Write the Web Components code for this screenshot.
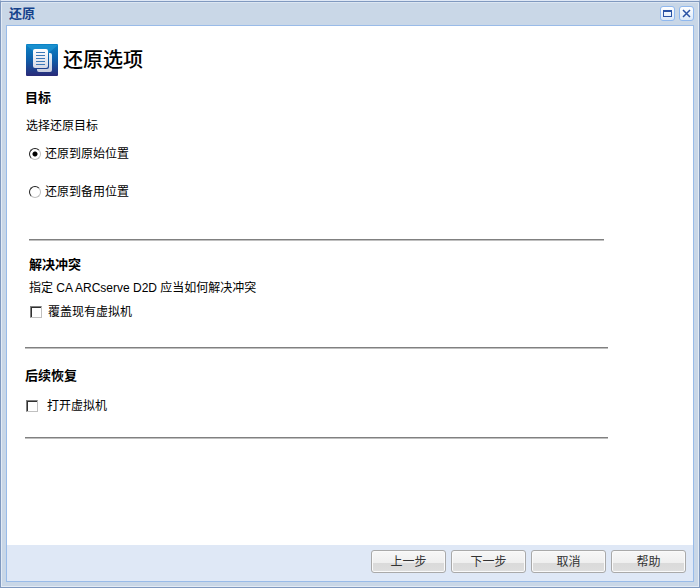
<!DOCTYPE html>
<html lang="zh-CN">
<head>
<meta charset="utf-8">
<title>还原</title>
<style>
  html, body {
    height: 100%;
    margin: 0;
  }
  body {
    font: 12px/16px "Liberation Sans", "Noto Sans CJK SC", sans-serif;
    color: #000;
    background: #dfe8f6;
  }
</style>
</head>
<body>
<restore-window heading="还原">
  <page-heading>还原选项</page-heading>

  <option-section class="target" heading="目标">
    <p slot="hint">选择还原目标</p>
    <choice-group>
      <choice-item type="radio" name="target" value="original" checked>还原到原始位置</choice-item>
      <choice-item type="radio" name="target" value="alternate">还原到备用位置</choice-item>
    </choice-group>
  </option-section>

  <option-section class="conflict" heading="解决冲突">
    <p slot="hint">指定 CA ARCserve D2D 应当如何解决冲突</p>
    <choice-item type="checkbox" name="overwrite">覆盖现有虚拟机</choice-item>
  </option-section>

  <option-section class="recovery" heading="后续恢复">
    <choice-item type="checkbox" name="poweron">打开虚拟机</choice-item>
  </option-section>

  <push-button slot="actions">上一步</push-button>
  <push-button slot="actions">下一步</push-button>
  <push-button slot="actions">取消</push-button>
  <push-button slot="actions">帮助</push-button>
</restore-window>

<script>
class RestoreWindow extends HTMLElement {
  connectedCallback() {
    this.attachShadow({ mode: 'open' });
    this.shadowRoot.innerHTML = `
      <style>
        :host {
          display: flex;
          flex-direction: column;
          box-sizing: border-box;
          min-height: 100%;
          padding: 0 5px 5px;
          border: 1px solid #8099bf;
          border-top-color: #dfe8f6;
          background: #c9d7e7;
          box-shadow: inset 1px -1px #e3ebf5, inset -1px 0 #e3ebf5;
        }
        header {
          display: flex;
          align-items: center;
          gap: 4px;
          height: 23px;
          margin: 0 -5px;
          padding: 0 5px 0 8px;
          border-top: 1px solid #8099bf;
          box-shadow: inset 0 1px #dce6f2;
        }
        h1 {
          flex: 1;
          margin: 0;
          font-size: 13px;
          line-height: 20px;
          color: #15428b;
        }
        .tool {
          display: block;
          width: 15px;
          height: 15px;
          padding: 0;
          border: 1px solid #90b8ee;
          border-radius: 3px;
          background: linear-gradient(#fff, #dce9f9);
          box-sizing: border-box;
        }
        .tool svg {
          display: block;
        }
        .frame {
          flex: 1;
          display: flex;
          flex-direction: column;
          border: 1px solid #99bbe8;
          background: #fff;
        }
        main {
          flex: 1;
          padding: 16px 18px;
        }
        footer {
          display: flex;
          justify-content: flex-end;
          gap: 5px;
          padding: 5px 7px 8px;
          background: #dfe8f6;
        }
      </style>
      <header>
        <h1></h1>
        <button class="tool" aria-label="最大化">
          <svg width="13" height="13" shape-rendering="crispEdges">
            <path d="M2 3h9v7h-9zM3 5v4h7v-4z" fill="#2a52a4" fill-rule="evenodd"/>
          </svg>
        </button>
        <button class="tool" aria-label="关闭">
          <svg width="13" height="13">
            <path d="M3 3l7 7M10 3l-7 7" stroke="#2a52a4" stroke-width="1.500"/>
          </svg>
        </button>
      </header>
      <div class="frame">
        <main><slot></slot></main>
        <footer><slot name="actions"></slot></footer>
      </div>
    `;
    this.shadowRoot.querySelector('h1').textContent = this.getAttribute('heading');
  }
}

class PageHeading extends HTMLElement {
  connectedCallback() {
    this.attachShadow({ mode: 'open' });
    this.shadowRoot.innerHTML = `
      <style>
        :host {
          display: flex;
          align-items: center;
          gap: 5px;
          height: 36px;
        }
        svg {
          margin-left: 1px;
        }
        h2 {
          margin: 0;
          font-size: 20px;
          font-weight: 500;
          line-height: 32px;
        }
      </style>
      <svg width="32" height="32" viewBox="0 0 32 32" aria-hidden="true">
        <defs>
          <linearGradient id="back" x1="0" y1="0" x2="0" y2="1">
            <stop offset="0" stop-color="#0c84c6"/>
            <stop offset=".45" stop-color="#0d62ad"/>
            <stop offset="1" stop-color="#2a2a78"/>
          </linearGradient>
          <linearGradient id="sheet" x1="0" y1="0" x2="0" y2="1">
            <stop offset="0" stop-color="#fff"/>
            <stop offset="1" stop-color="#d5d9e6"/>
          </linearGradient>
        </defs>
        <rect width="32" height="32" rx="1" fill="url(#back)"/>
        <path d="M0 1h32L18 13h-4z" fill="#2ba7e0" opacity=".45"/>
        <path d="M23 9h1q2 0 2 2v15q0 2-2 2H13q-2 0-2-2v-1h10q2 0 2-2z" fill="url(#sheet)" opacity=".92"/>
        <rect x="7" y="5" width="15" height="19" rx="2" fill="url(#sheet)"/>
        <path d="M10 8.500h9M10 11.500h9M10 14.500h9M10 17.500h9M10 20.500h9" stroke="#3d79b8"/>
      </svg>
      <h2><slot></slot></h2>
    `;
  }
}

class OptionSection extends HTMLElement {
  connectedCallback() {
    this.attachShadow({ mode: 'open' });
    this.shadowRoot.innerHTML = `
      <style>
        :host {
          display: block;
          max-width: 583px;
        }
        h3 {
          margin: 0;
          font-size: 13px;
          line-height: 16px;
        }
        ::slotted(p) {
          margin: 0;
        }
        .rule {
          height: 1px;
          border-top: 1px solid #808080;
          background: #c0c0c0;
        }
        :host(.target) {
          padding-top: 12px;
        }
        :host(.target) ::slotted(p) {
          margin: 12px 1px;
        }
        :host(.target) .body {
          padding: 0 4px 39px;
        }
        :host(.target) .rule {
          margin: 0 4px;
        }
        :host(.conflict) {
          padding-top: 16px;
        }
        :host(.conflict) h3,
        :host(.conflict) ::slotted(p) {
          margin: 0 4px 7px;
        }
        :host(.conflict) .body {
          padding: 1px 5px 27px;
        }
        :host(.recovery) {
          padding-top: 19px;
        }
        :host(.recovery) .body {
          padding: 14px 1px 23px;
        }
      </style>
      <h3></h3>
      <slot name="hint"></slot>
      <div class="body"><slot></slot></div>
      <div class="rule"></div>
    `;
    this.shadowRoot.querySelector('h3').textContent = this.getAttribute('heading');
  }
}

class ChoiceGroup extends HTMLElement {
  connectedCallback() {
    this.attachShadow({ mode: 'open' });
    this.shadowRoot.innerHTML = `
      <style>
        :host {
          display: flex;
          flex-direction: column;
          gap: 22px;
        }
      </style>
      <slot></slot>
    `;

    // Radios live in separate shadow roots, so uncheck the others by hand
    this.addEventListener('choice', (e) => {
      this.querySelectorAll('choice-item').forEach((item) => {
        if (item !== e.target) {
          item.shadowRoot.querySelector('input').checked = false;
        }
      });
    });
  }
}

class ChoiceItem extends HTMLElement {
  connectedCallback() {
    this.attachShadow({ mode: 'open' });
    this.shadowRoot.innerHTML = `
      <style>
        :host {
          display: block;
        }
        label {
          display: flex;
          align-items: center;
          gap: 6px;
        }
        input {
          appearance: none;
          flex: none;
          width: 12px;
          height: 12px;
          margin: 0;
          box-sizing: border-box;
          background: #fff;
        }
        input[type=checkbox] {
          border: 1px solid;
          border-color: #808080 #c0c0c0 #c0c0c0 #808080;
          box-shadow: inset 1px 1px #303030;
        }
        input[type=checkbox]:checked {
          background: linear-gradient(#000, #000) center / 6px 6px no-repeat;
        }
        input[type=radio] {
          border: 1px solid;
          border-color: #202020 #c0c0c0 #c0c0c0 #202020;
          border-radius: 50%;
        }
        input[type=radio]:checked {
          background: radial-gradient(circle, #000 2px, transparent 3px);
        }
        :host([type=radio]) label {
          gap: 4px;
        }
        :host([name=poweron]) label {
          gap: 9px;
        }
      </style>
      <label><input><span><slot></slot></span></label>
    `;

    const input = this.shadowRoot.querySelector('input');
    input.type = this.getAttribute('type');
    input.name = this.getAttribute('name');
    input.value = this.getAttribute('value') || 'on';
    input.checked = this.hasAttribute('checked');
    input.addEventListener('change', () => {
      this.dispatchEvent(new CustomEvent('choice', { bubbles: true }));
    });
  }
}

class PushButton extends HTMLElement {
  connectedCallback() {
    this.attachShadow({ mode: 'open' });
    this.shadowRoot.innerHTML = `
      <style>
        :host {
          display: block;
        }
        button {
          display: block;
          width: 75px;
          height: 23px;
          padding: 0;
          border: 1px solid #a9a9a9;
          border-radius: 3px;
          box-shadow: inset 0 0 0 1px #fafafa;
          background: linear-gradient(#f7f7f7, #efefef 55%, #dadada 55%, #dedede);
          font: inherit;
          color: #333;
        }
        button:active {
          background: #dadada;
        }
      </style>
      <button><slot></slot></button>
    `;
  }
}

customElements.define('restore-window', RestoreWindow);
customElements.define('page-heading', PageHeading);
customElements.define('option-section', OptionSection);
customElements.define('choice-group', ChoiceGroup);
customElements.define('choice-item', ChoiceItem);
customElements.define('push-button', PushButton);
</script>
</body>
</html>
